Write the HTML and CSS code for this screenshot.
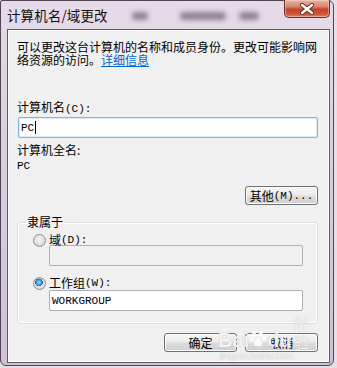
FILE: index.html
```html
<!DOCTYPE html>
<html lang="zh-CN">
<head>
<meta charset="utf-8">
<title>计算机名/域更改</title>
<link rel="stylesheet" href="styles.css">
</head>
<body>
<div class="window">
  <div class="titlebar">
    <span class="title">计算机名/域更改</span>
    <span class="smudge s1"></span>
    <span class="smudge s2"></span>
    <span class="smudge s3"></span>
    <button class="close" aria-label="关闭">
      <svg width="18" height="12" viewBox="0 0 18 12">
        <path d="M4 2 L14 10 M14 2 L4 10" stroke="#5a2a22" stroke-width="4.2" stroke-linecap="round" fill="none"/>
        <path d="M4 2 L14 10 M14 2 L4 10" stroke="#ffffff" stroke-width="2.4" stroke-linecap="round" fill="none"/>
      </svg>
    </button>
  </div>
  <div class="client">
    <p class="desc">可以更改这台计算机的名称和成员身份。更改可能影响网<br>络资源的访问。<a class="link" href="#">详细信息</a></p>
    <div class="lbl name-lbl">计算机名<span class="lat">(C):</span></div>
    <div class="field name-field"><span class="mono">PC</span><span class="caret"></span></div>
    <div class="lbl full-lbl">计算机全名:</div>
    <div class="mono full-val">PC</div>
    <div class="row-right"><button class="btn">其他<span class="lat">(M)...</span></button></div>
    <fieldset class="group">
      <legend>隶属于</legend>
      <div class="radio-row"><span class="radio"></span>域<span class="lat">(D):</span></div>
      <div class="field sub disabled"></div>
      <div class="radio-row second"><span class="radio checked"></span>工作组<span class="lat">(W):</span></div>
      <div class="field sub"><span class="mono">WORKGROUP</span></div>
    </fieldset>
    <div class="actions">
      <button class="btn">确定</button>
      <button class="btn">取消</button>
    </div>
    <div class="watermark">
      <div class="wm-top"><span class="wm-bai">Bai</span><span class="wm-paw">
        <svg width="16" height="18" viewBox="0 0 16 18"><ellipse cx="4" cy="4" rx="2" ry="2.6" fill="#fff"/><ellipse cx="11" cy="3" rx="2" ry="2.6" fill="#fff"/><ellipse cx="1.8" cy="9" rx="1.6" ry="2.2" fill="#fff"/><ellipse cx="14.2" cy="8" rx="1.6" ry="2.2" fill="#fff"/><path d="M8 8 C4 11 2 16 6 16 C7 16 9 16 10 16 C14 16 12 11 8 8 Z" fill="#fff"/></svg></span><span class="wm-du">du</span><span class="wm-jy">经验</span></div>
      <div class="wm-url">jingyan.baidu.com</div>
    </div>
  </div>
</div>
</body>
</html>
```
FILE: styles.css
```css
html, body {
  margin: 0;
  padding: 0;
}
body {
  width: 337px;
  height: 368px;
  background: #e4e0e6;
  font-family: "Noto Sans CJK SC", "Noto Sans", sans-serif;
  font-size: 12px;
  color: #000;
  overflow: hidden;
}
.window {
  box-sizing: border-box;
  width: 334px;
  height: 366px;
  border: 1px solid #4e4452;
  border-radius: 2px 6px 6px 6px;
  background: linear-gradient(180deg, #e6dbe8 0%, #dccfe0 40%, #d2c0d6 100%);
  padding: 0 3px 2px 6px;
  display: flex;
  flex-direction: column;
}
.titlebar {
  height: 28px;
  display: flex;
  align-items: flex-start;
}
.title {
  font-size: 13.5px;
  line-height: 14px;
  margin-top: 7px;
  color: #111;
  letter-spacing: 0.1px;
}
.smudge {
  display: block;
  height: 8px;
  margin-top: 11px;
  background: rgba(70, 55, 75, 0.55);
  filter: blur(2.5px);
  border-radius: 4px;
}
.s1 { width: 16px; margin-left: 24px; }
.s2 { width: 46px; margin-left: 32px; }
.s3 { width: 20px; margin-left: 13px; }
.close {
  margin-left: auto;
  width: 46px;
  height: 18px;
  margin-top: -1px;
  border: 1px solid #6e2b22;
  border-top: none;
  border-radius: 0 0 5px 5px;
  background: linear-gradient(180deg, #eab4a6 0%, #d9826d 40%, #c4402a 55%, #cf5a3c 85%, #e48a6a 100%);
  box-shadow: inset 0 0 0 1px rgba(255, 220, 210, 0.45);
  padding: 0;
  display: flex;
  align-items: center;
  justify-content: center;
}
.client {
  flex: 1;
  border: 1px solid #5d5a60;
  background: #f0f0f0;
  padding: 10px 11px 0 9px;
  position: relative;
  display: flex;
  flex-direction: column;
  box-shadow: inset 0 0 0 1px #ffffff;
}
.desc {
  margin: 0;
  line-height: 13px;
  white-space: nowrap;
}
.link {
  color: #0066cc;
  text-decoration: underline;
}
.lat {
  font-family: "Liberation Mono", monospace;
  font-size: 11px;
}
.mono {
  font-family: "Liberation Mono", monospace;
  font-size: 11px;
}
.lbl {
  line-height: 12px;
}
.name-lbl { margin-top: 35px; }
.field {
  box-sizing: border-box;
  height: 21px;
  background: #fff;
  border: 1px solid #abadb3;
  border-radius: 2px;
  display: flex;
  align-items: center;
  padding-left: 2px;
  line-height: 12px;
}
.name-field {
  margin-top: 2px;
  margin-left: 1px;
  border-color: #7eb4ea;
  box-shadow: inset 0 0 0 1px #dbeafb;
}
.caret {
  display: inline-block;
  width: 1px;
  height: 13px;
  background: #000;
  margin-left: 1px;
}
.full-lbl { margin-top: 6px; }
.full-val { margin-top: 4px; line-height: 12px; }
.row-right {
  display: flex;
  justify-content: flex-end;
  margin-top: 14px;
}
.btn {
  box-sizing: border-box;
  width: 73px;
  height: 19px;
  border: 1px solid #707070;
  border-radius: 3px;
  background: linear-gradient(180deg, #f6f6f6 0%, #ebebeb 48%, #dddddd 52%, #cfcfcf 100%);
  box-shadow: inset 0 0 0 1px #fbfbfb;
  font-family: "Noto Sans CJK SC", "Noto Sans", sans-serif;
  font-size: 12px;
  line-height: 12px;
  padding: 0;
  color: #000;
  display: flex;
  align-items: center;
  justify-content: center;
}
.group {
  margin: 11px 0 0 0;
  padding: 5px 14px 12px 15px;
  border: 1px solid #d5dfe5;
  border-radius: 3px;
  box-shadow: inset 0 0 0 1px #fff;
}
.group legend {
  padding: 0 2px;
  margin-left: -8px;
  line-height: 12px;
}
.radio-row {
  display: flex;
  align-items: center;
  height: 14px;
  line-height: 12px;
}
.radio-row.second { margin-top: 10px; }
.radio {
  box-sizing: border-box;
  width: 13px;
  height: 13px;
  border-radius: 50%;
  border: 1px solid #8e8f8f;
  background: radial-gradient(circle at 50% 40%, #f4f4f4 0%, #e2e2e2 50%, #c9c9c9 100%);
  margin-right: 3px;
  flex: none;
}
.radio.checked {
  background:
    radial-gradient(circle at 45% 40%, #a9e0ff 0%, #3a9ee0 28%, #1d5fa6 42%, transparent 45%),
    radial-gradient(circle at 50% 40%, #f4f4f4 0%, #e2e2e2 60%, #c9c9c9 100%);
}
.field.sub {
  margin-left: 16px;
}
.group .field.disabled {
  margin-top: -2px;
  background: #f0f0f0;
  border-color: #adb2b5;
}
.actions {
  display: flex;
  justify-content: flex-end;
  gap: 8px;
  margin-top: 9px;
}
.watermark {
  position: absolute;
  left: 210px;
  top: 298px;
  width: 100px;
  color: rgba(255, 255, 255, 0.85);
  text-shadow: 0 0 1px rgba(150, 150, 150, 0.7);
  pointer-events: none;
}
.wm-top {
  display: flex;
  align-items: flex-end;
  height: 22px;
}
.wm-bai, .wm-du {
  font-family: "Liberation Sans", sans-serif;
  font-weight: bold;
  font-size: 20px;
  line-height: 20px;
}
.wm-paw {
  display: flex;
  align-items: flex-end;
  margin: 0 1px 2px 1px;
  opacity: 0.9;
}
.wm-jy {
  font-size: 16px;
  line-height: 18px;
  margin-left: 2px;
}
.wm-url {
  font-family: "Liberation Sans", sans-serif;
  font-size: 9px;
  line-height: 10px;
  margin-top: 1px;
  margin-left: 2px;
  color: rgba(255, 255, 255, 0.8);
}
```
